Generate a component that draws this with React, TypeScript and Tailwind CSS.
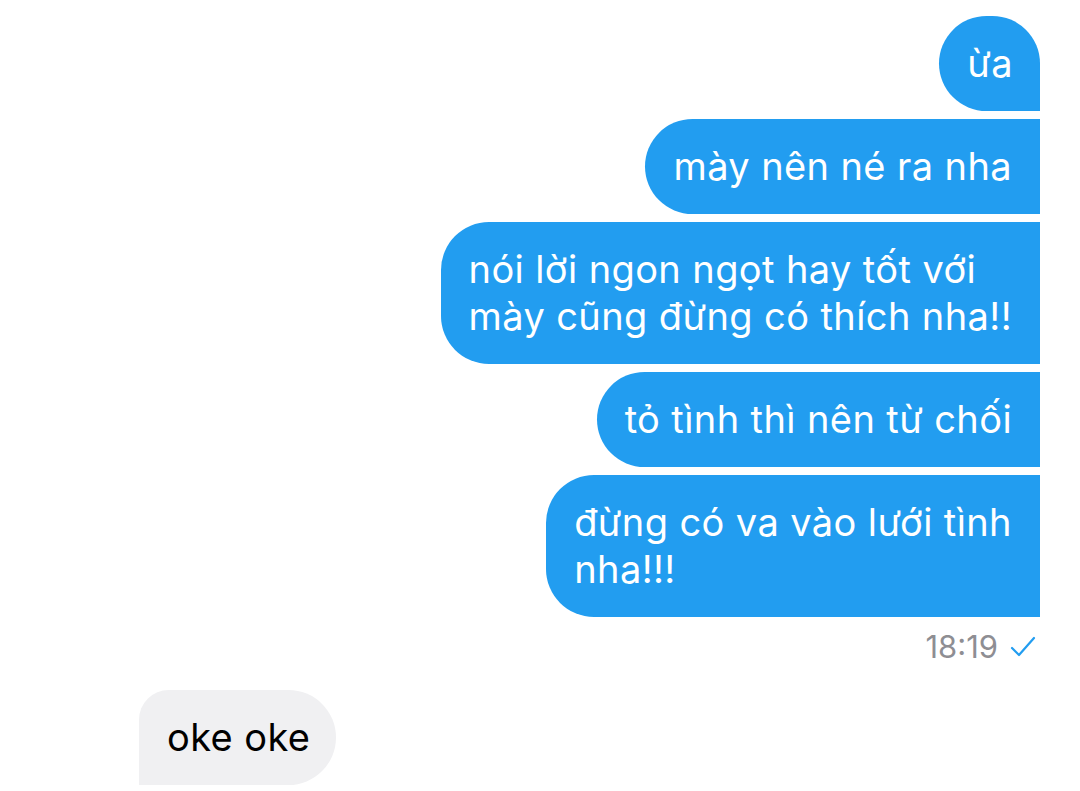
const sent = [
  { lines: ['ừa'], first: true },
  { lines: ['mày nên né ra nha'] },
  { lines: ['nói lời ngon ngọt hay tốt với', 'mày cũng đừng có thích nha!!'] },
  { lines: ['tỏ tình thì nên từ chối'] },
  { lines: ['đừng có va vào lưới tình', 'nha!!!'] },
];

export default function App() {
  return (
    <div className="w-[1080px] h-[791px] bg-white overflow-hidden font-['Inter',sans-serif] text-[38px] leading-[47px] tracking-[0.4px]">
      <div className="flex flex-col items-end gap-2 pt-4 pr-10">
        {sent.map((m, i) => (
          <div
            key={i}
            className={
              'bg-[#229df0] text-white pl-7 py-6 rounded-l-[48px] ' +
              (m.first ? 'rounded-tr-[48px] pr-[27px]' : 'pr-[28px]')
            }
          >
            {m.lines.map((l, j) => (
              <div key={j}>{l}</div>
            ))}
          </div>
        ))}
        <div className="flex items-center gap-3 mt-[2px] mr-[4px] text-[31px] text-[#8e8e93] leading-[40px] tracking-normal">
          <span>18:19</span>
          <svg width="26" height="22" viewBox="0 0 26 22" fill="none">
            <path d="M2 12 L9 19 L24 2" stroke="#229df0" strokeWidth="2.2" strokeLinecap="round" strokeLinejoin="round" />
          </svg>
        </div>
      </div>
      <div className="flex pl-[139px] mt-[23px]">
        <div className="bg-[#f0f0f2] text-black pl-7 pr-[26px] py-6 rounded-tl-[30px] rounded-r-[48px]">
          oke oke
        </div>
      </div>
    </div>
  );
}
